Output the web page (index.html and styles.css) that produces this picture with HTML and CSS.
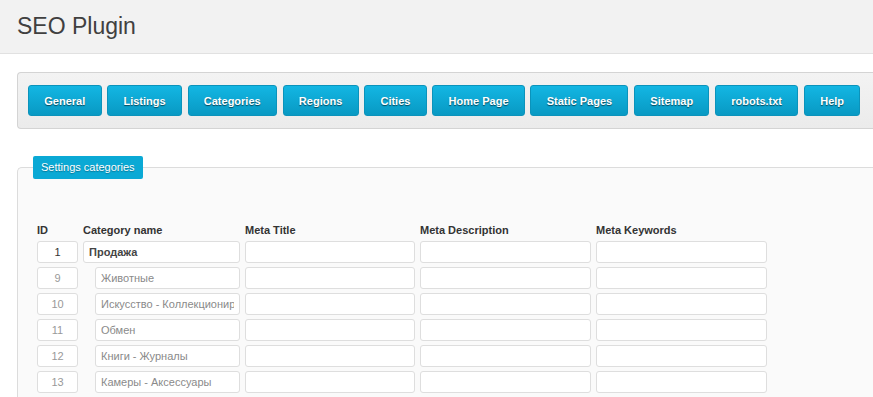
FILE: index.html
```html
<!DOCTYPE html>
<html lang="en">
<head>
<meta charset="utf-8">
<title>SEO Plugin</title>
<link rel="stylesheet" href="styles.css">
</head>
<body>
<header class="page-header">
  <h1 class="page-title">SEO Plugin</h1>
</header>
<nav class="toolbar">
  <a class="tab-btn">General</a>
  <a class="tab-btn">Listings</a>
  <a class="tab-btn">Categories</a>
  <a class="tab-btn">Regions</a>
  <a class="tab-btn">Cities</a>
  <a class="tab-btn">Home Page</a>
  <a class="tab-btn">Static Pages</a>
  <a class="tab-btn">Sitemap</a>
  <a class="tab-btn">robots.txt</a>
  <a class="tab-btn">Help</a>
</nav>
<fieldset class="settings">
  <legend class="settings-legend">Settings categories</legend>
  <div class="cat-grid">
    <div class="col-head">ID</div>
    <div class="col-head">Category name</div>
    <div class="col-head">Meta Title</div>
    <div class="col-head">Meta Description</div>
    <div class="col-head">Meta Keywords</div>

    <input class="field id-field parent" type="text" value="1">
    <input class="field name-field parent" type="text" value="Продажа">
    <input class="field" type="text">
    <input class="field" type="text">
    <input class="field" type="text">

    <input class="field id-field" type="text" value="9">
    <input class="field name-field child" type="text" value="Животные">
    <input class="field" type="text">
    <input class="field" type="text">
    <input class="field" type="text">

    <input class="field id-field" type="text" value="10">
    <input class="field name-field child" type="text" value="Искусство - Коллекционирование">
    <input class="field" type="text">
    <input class="field" type="text">
    <input class="field" type="text">

    <input class="field id-field" type="text" value="11">
    <input class="field name-field child" type="text" value="Обмен">
    <input class="field" type="text">
    <input class="field" type="text">
    <input class="field" type="text">

    <input class="field id-field" type="text" value="12">
    <input class="field name-field child" type="text" value="Книги - Журналы">
    <input class="field" type="text">
    <input class="field" type="text">
    <input class="field" type="text">

    <input class="field id-field" type="text" value="13">
    <input class="field name-field child" type="text" value="Камеры - Аксессуары">
    <input class="field" type="text">
    <input class="field" type="text">
    <input class="field" type="text">
  </div>
</fieldset>
</body>
</html>
```
FILE: styles.css
```css
html, body {
  margin: 0;
  padding: 0;
  overflow: hidden;
  background: #ffffff;
}
body {
  font-family: "Liberation Sans", Arial, sans-serif;
  color: #333333;
  width: 873px;
  height: 397px;
}
.page-header {
  height: 53px;
  background: #f2f2f2;
  border-bottom: 1px solid #e1e1e1;
  padding-left: 17px;
}
.page-title {
  margin: 0;
  font-size: 23px;
  font-weight: normal;
  line-height: 52px;
  color: #404040;
}
.toolbar {
  margin: 18px -20px 0 17px;
  padding: 12px 10px;
  height: 31px;
  display: flex;
  gap: 5.6px;
  background: linear-gradient(#f3f3f3, #ebebeb);
  border: 1px solid #d4d4d4;
  border-right: none;
  border-radius: 4px 0 0 4px;
}
.tab-btn {
  display: flex;
  align-items: center;
  height: 29px;
  padding: 0 15.3px;
  background: linear-gradient(#13b6e3, #0899c3);
  border: 1px solid #0b93bb;
  border-radius: 3px;
  color: #ffffff;
  font-size: 11px;
  font-weight: bold;
  text-shadow: 0 1px 1px rgba(0, 0, 0, 0.55);
  white-space: nowrap;
}
.settings {
  margin: 27px -20px 0 17px;
  padding: 45px 0 20px 15px;
  border: 1px solid #dcdcdc;
  border-right: none;
  border-radius: 5px 0 0 0;
  background: #fafafa;
  min-width: 0;
}
.settings-legend {
  padding: 0 8px;
  height: 23px;
  line-height: 23px;
  background: #0aa9d5;
  border-radius: 2px;
  color: #ffffff;
  font-size: 11px;
  text-shadow: 0 1px 1px rgba(0, 0, 0, 0.3);
}
.cat-grid {
  padding-left: 4px;
  display: grid;
  grid-template-columns: 41px 157px 170px 171px 171px;
  column-gap: 5px;
  row-gap: 4px;
  grid-auto-rows: 22px;
  grid-template-rows: 13px;
}
.col-head {
  font-size: 11px;
  font-weight: bold;
  line-height: 13px;
  color: #333333;
  white-space: nowrap;
}
.field {
  box-sizing: border-box;
  width: 100%;
  height: 22px;
  margin: 0;
  padding: 0 5px;
  border: 1px solid #dedede;
  border-radius: 3px;
  background: #ffffff;
  font-family: "Liberation Sans", Arial, sans-serif;
  font-size: 11px;
  color: #8a8a8a;
  outline: none;
}
.id-field {
  text-align: center;
  color: #999999;
}
.id-field.parent {
  color: #333333;
}
.name-field.parent {
  font-weight: bold;
  color: #444444;
}
.name-field.child {
  margin-left: 12px;
  width: 145px;
}
```
